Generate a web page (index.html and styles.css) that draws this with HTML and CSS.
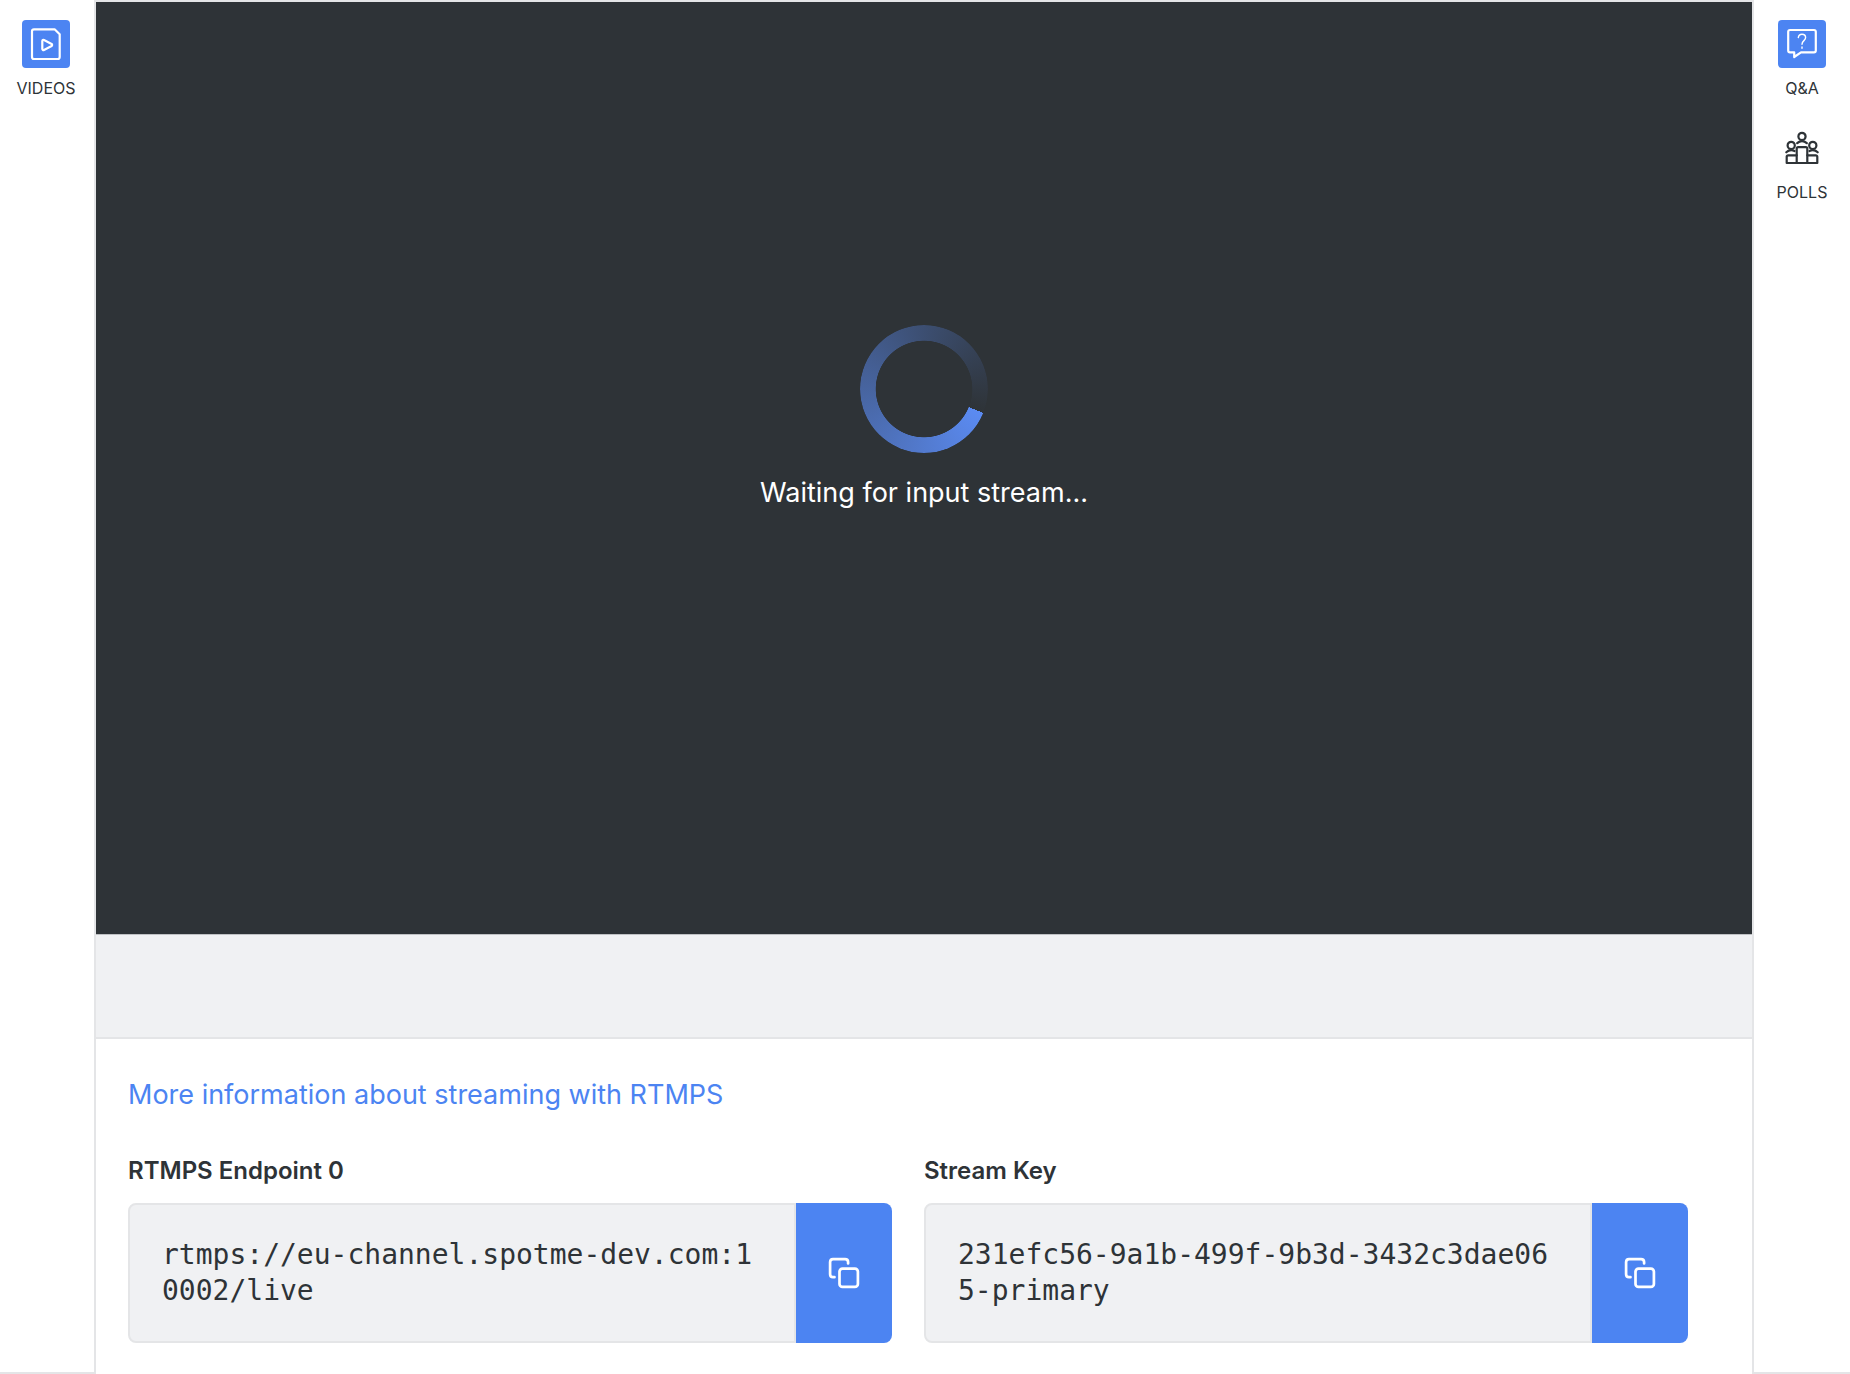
FILE: index.html
```html
<!DOCTYPE html>
<html lang="en">
  <head>
    <meta charset="UTF-8" />
    <meta name="viewport" content="width=device-width, initial-scale=1.0" />
    <title>Live Stream</title>
    <link rel="stylesheet" href="styles.css">
  </head>
  <body>
    <nav class="rail rail-left">
      <button class="rail-item active" type="button">
        <svg class="rail-icon" viewBox="0 0 48 48">
          <path d="M12 9.3H32.6L37.7 14.2V37A2 2 0 0 1 35.7 39H12A2 2 0 0 1 10 37V11.3A2 2 0 0 1 12 9.3Z" />
          <path d="M20.3 21V29A1.2 1.2 0 0 0 22 30L29.6 26A1.2 1.2 0 0 0 29.6 24L22 20A1.2 1.2 0 0 0 20.3 21Z" />
        </svg>
        <span>VIDEOS</span>
      </button>
    </nav>

    <main class="content">
      <section class="player">
        <div class="spinner"></div>
        <p class="player-status" role="status">Waiting for input stream...</p>
      </section>
      <div class="player-bar"></div>

      <section class="details">
        <a class="info-link" href="#rtmps">More information about streaming with RTMPS</a>
        <div class="fields">
          <div class="field">
            <label for="endpoint">RTMPS Endpoint 0</label>
            <div class="field-box">
              <textarea id="endpoint" rows="2" spellcheck="false" readonly>rtmps://eu-channel.spotme-dev.com:10002/live</textarea>
              <button class="copy" type="button" data-copy="endpoint" aria-label="Copy endpoint">
                <svg viewBox="0 0 32 32">
                  <rect x="11.5" y="11.7" width="18.4" height="18.2" rx="3" />
                  <path d="M20.1 6.5V5A3 3 0 0 0 17.1 2.1H5A3 3 0 0 0 2.1 5V17.2A3 3 0 0 0 5 20.2H6.5" />
                </svg>
              </button>
            </div>
          </div>
          <div class="field">
            <label for="streamKey">Stream Key</label>
            <div class="field-box">
              <textarea id="streamKey" rows="2" spellcheck="false" readonly>231efc56-9a1b-499f-9b3d-3432c3dae065-primary</textarea>
              <button class="copy" type="button" data-copy="streamKey" aria-label="Copy stream key">
                <svg viewBox="0 0 32 32">
                  <rect x="11.5" y="11.7" width="18.4" height="18.2" rx="3" />
                  <path d="M20.1 6.5V5A3 3 0 0 0 17.1 2.1H5A3 3 0 0 0 2.1 5V17.2A3 3 0 0 0 5 20.2H6.5" />
                </svg>
              </button>
            </div>
          </div>
        </div>
      </section>
    </main>

    <nav class="rail rail-right">
      <button class="rail-item active" type="button">
        <svg class="rail-icon" viewBox="0 0 48 48">
          <path d="M12 10H36A1.8 1.8 0 0 1 37.8 11.8V30.5A1.8 1.8 0 0 1 36 32.3H23L16.2 37V32.3H12A1.8 1.8 0 0 1 10.2 30.5V11.8A1.8 1.8 0 0 1 12 10Z" />
          <path class="thin" d="M20.3 17.6C20.6 15.5 22 14.3 24 14.3C26.2 14.3 27.6 15.6 27.6 17.6C27.6 20.7 24 20.6 24 24.3M24 27V28.3" />
        </svg>
        <span>Q&amp;A</span>
      </button>
      <button class="rail-item" type="button">
        <svg class="rail-icon" viewBox="0 0 48 48">
          <circle cx="24" cy="12.4" r="3.6" />
          <path d="M19.2 19.2C20.8 17.8 22.3 17.2 24 17.2C25.7 17.2 27.2 17.8 28.8 19.2" />
          <circle cx="13.2" cy="21.4" r="3.6" />
          <path d="M8.3 28.3C9.8 26.9 11.4 26.2 13.2 26.2C14.4 26.2 15.5 26.5 16.5 27" />
          <circle cx="34.8" cy="21.4" r="3.6" />
          <path d="M39.7 28.3C38.2 26.9 36.6 26.2 34.8 26.2C33.6 26.2 32.5 26.5 31.5 27" />
          <path d="M18.7 39V24.6A1.5 1.5 0 0 1 20.2 23.1H27.8A1.5 1.5 0 0 1 29.3 24.6V39" />
          <path d="M18.7 31.3H10.2A1.5 1.5 0 0 0 8.7 32.8V39H39.3V32.8A1.5 1.5 0 0 0 37.8 31.3H29.3" />
        </svg>
        <span>POLLS</span>
      </button>
    </nav>

    <script>
      document.querySelectorAll(".copy").forEach(function (btn) {
        btn.addEventListener("click", function () {
          var field = document.getElementById(btn.dataset.copy);
          field.select();
          document.execCommand("copy");
        });
      });
    </script>
  </body>
</html>
```

FILE: styles.css
```css
:root {
  --accent: #4c84f2;
  --dark: #2e3337;
  --gray: #f0f1f3;
  --line: #e4e5e7;
}
* {
  box-sizing: border-box;
}
body {
  margin: 0;
  min-height: 100vh;
  display: flex;
  font-family: Inter, "Liberation Sans", sans-serif;
  color: var(--dark);
  background-color: #fff;
}
button {
  border: 0;
  padding: 0;
  font: inherit;
  color: inherit;
  background: none;
  cursor: pointer;
}

.rail {
  flex: none;
  display: flex;
  flex-direction: column;
  align-items: center;
  gap: 24px;
  padding-top: 20px;
  border-bottom: 2px solid var(--line);
}
.rail-left {
  width: 96px;
  padding-right: 2px;
  border-right: 2px solid var(--line);
}
.rail-right {
  width: 98px;
  border-left: 2px solid var(--line);
}
.rail-item {
  display: flex;
  flex-direction: column;
  align-items: center;
  gap: 8px;
  font-size: 16px;
  line-height: 24px;
}
.rail-icon {
  width: 48px;
  height: 48px;
  border-radius: 4px;
  fill: none;
  stroke: var(--dark);
  stroke-width: 2.2;
  stroke-linecap: round;
  stroke-linejoin: round;
}
.rail-icon .thin {
  stroke-width: 1.4;
}
.active .rail-icon {
  background-color: var(--accent);
  stroke: #fff;
}

.content {
  flex: 1;
  min-width: 0;
  border-top: 2px solid var(--line);
}
.player {
  aspect-ratio: 16 / 9;
  display: flex;
  flex-direction: column;
  align-items: center;
  justify-content: center;
  gap: 24px;
  padding-bottom: 102px;
  background-color: var(--dark);
}
.spinner {
  width: 128px;
  height: 128px;
  border-radius: 50%;
  background: conic-gradient(from 112deg, #5b8bf2, #2e3337);
  -webkit-mask: radial-gradient(closest-side, transparent 75%, #000 76%);
  mask: radial-gradient(closest-side, transparent 75%, #000 76%);
}
.player-status {
  margin: 0;
  font-size: 27px;
  line-height: 32px;
  color: #fff;
}
.player-bar {
  height: 105px;
  background-color: var(--gray);
  border-top: 1px solid #bfc1c4;
  border-bottom: 2px solid var(--line);
}

.details {
  padding: 40px 64px 31px 32px;
}
.info-link {
  display: block;
  font-size: 27px;
  line-height: 32px;
  color: var(--accent);
  text-decoration: none;
}
.fields {
  display: grid;
  grid-template-columns: 1fr 1fr;
  gap: 32px;
  margin-top: 42px;
}
.field label {
  display: block;
  margin-bottom: 14px;
  font-size: 24px;
  font-weight: 600;
  line-height: 36px;
}
.field-box {
  display: flex;
}
.field-box textarea {
  flex: 1;
  min-width: 0;
  margin: 0;
  padding: 32px;
  border: 2px solid var(--line);
  border-radius: 8px 0 0 8px;
  outline: 0;
  resize: none;
  overflow: hidden;
  font-family: "DejaVu Sans Mono", monospace;
  font-size: 28px;
  line-height: 36px;
  word-break: break-all;
  color: var(--dark);
  background-color: var(--gray);
}
.copy {
  flex: none;
  display: flex;
  align-items: center;
  justify-content: center;
  width: 96px;
  border-radius: 0 8px 8px 0;
  background-color: var(--accent);
}
.copy svg {
  width: 32px;
  height: 32px;
  fill: none;
  stroke: #fff;
  stroke-width: 2.7;
  stroke-linecap: round;
}
```
